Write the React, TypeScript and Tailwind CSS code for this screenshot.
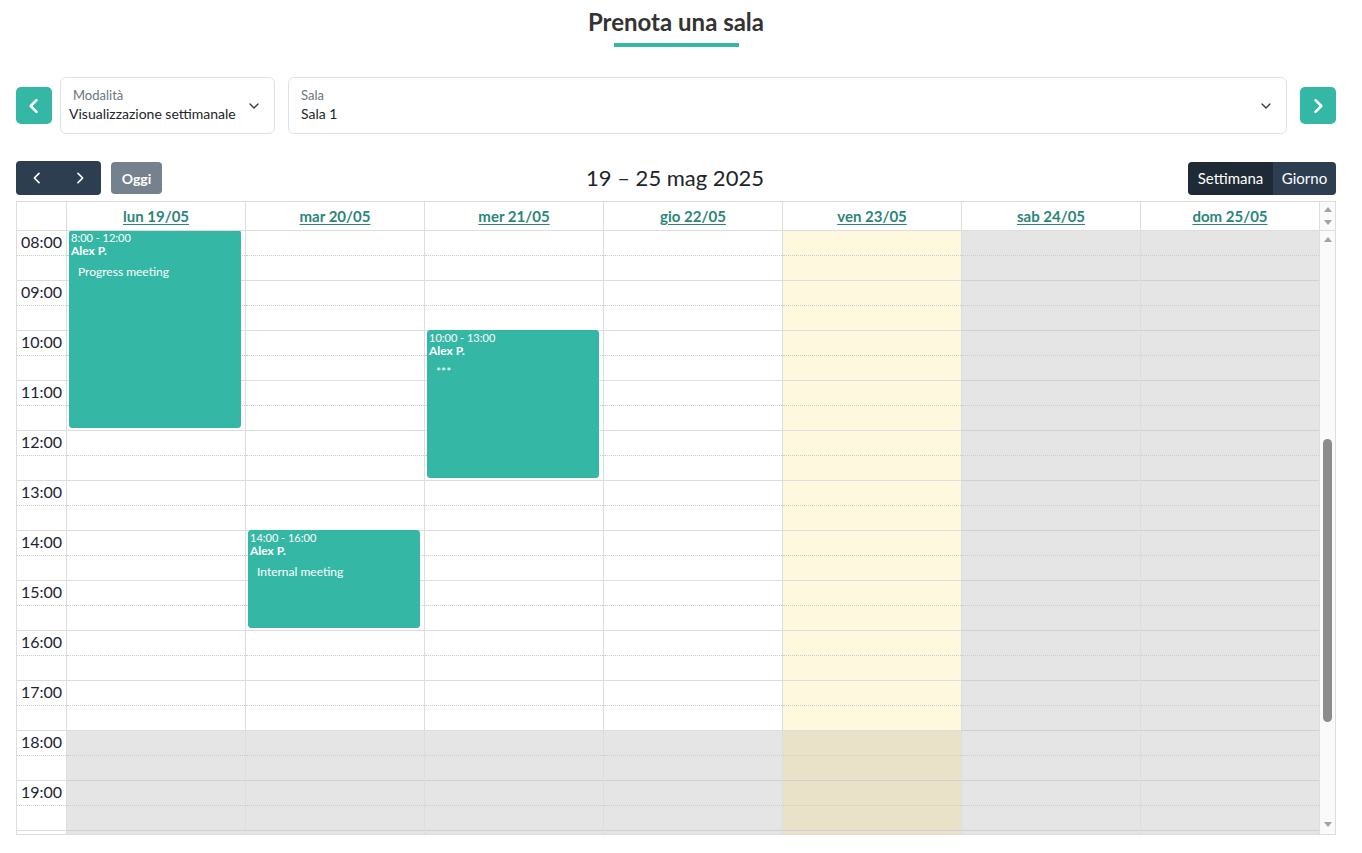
import React from "react";

type CalEvent = {
  day: number;
  start: number;
  end: number;
  time: string;
  who: string;
  title: string;
};

const days = [
  "lun 19/05",
  "mar 20/05",
  "mer 21/05",
  "gio 22/05",
  "ven 23/05",
  "sab 24/05",
  "dom 25/05",
];

const TODAY = 4;
const FIRST_HOUR = 8;
const HOUR_PX = 50;
const hours = [8, 9, 10, 11, 12, 13, 14, 15, 16, 17, 18, 19, 20];

const events: CalEvent[] = [
  { day: 0, start: 8, end: 12, time: "8:00 - 12:00", who: "Alex P.", title: "Progress meeting" },
  { day: 2, start: 10, end: 13, time: "10:00 - 13:00", who: "Alex P.", title: "***" },
  { day: 1, start: 14, end: 16, time: "14:00 - 16:00", who: "Alex P.", title: "Internal meeting" },
];

const pad = (h: number) => (h < 10 ? "0" + h : "" + h) + ":00";

const Chevron = ({ dir, className }: { dir: "left" | "right" | "down"; className?: string }) => {
  const pts =
    dir === "left" ? "15 5 8 12 15 19" : dir === "right" ? "9 5 16 12 9 19" : "6 9 12 15 18 9";
  return (
    <svg viewBox="0 0 24 24" className={className} fill="none" stroke="currentColor" strokeLinecap="round" strokeLinejoin="round">
      <polyline points={pts} />
    </svg>
  );
};

const Tri = ({ up }: { up?: boolean }) => (
  <svg width="8" height="5" viewBox="0 0 8 5" className="block">
    <polygon points={up ? "0,5 8,5 4,0" : "0,0 8,0 4,5"} fill="#a3a3a3" />
  </svg>
);

function cellBg(day: number, hour: number) {
  const off = hour >= 18;
  if (day >= 5) return "bg-[#e5e5e5] border-[#d0d0d0]";
  if (day === TODAY) return off ? "bg-[#e9e2c9] border-[#d0d0d0]" : "bg-[#fef8df] border-[#dddddd]";
  return off ? "bg-[#e5e5e5] border-[#d0d0d0]" : "bg-white border-[#dddddd]";
}

const SelectBox = ({
  label,
  value,
  className,
  valueClass,
}: {
  label: string;
  value: string;
  className: string;
  valueClass: string;
}) => (
  <div className={"relative h-[57px] rounded-[6px] border border-[#dee2e6] bg-white pt-[9px] " + className}>
    <div className="pl-[12px] text-[13px] leading-[16px] text-[#6c757d]">{label}</div>
    <div className={"mt-[2px] text-[14px] leading-[18px] text-[#212529] " + valueClass}>{value}</div>
    <Chevron dir="down" className="absolute right-[12px] top-[20px] h-[16px] w-[16px] stroke-[2px] text-[#343a40]" />
  </div>
);

export default function App() {
  return (
    <div className="min-h-screen bg-white font-['Lato','Noto_Sans',sans-serif] text-[#212529]">
      <div className="pl-[16px] pr-[26px] pt-[7px]">
        <h1 className="text-center text-[24px] font-bold leading-[29px] text-[#333333]">Prenota una sala</h1>
        <div className="mx-auto mt-[7px] h-[4px] w-[125px] bg-[#35b7a5]" />

        <div className="mt-[30px] flex items-center">
          <button className="flex h-[37px] w-[36px] items-center justify-center rounded-[5px] bg-[#35b7a5] text-white">
            <Chevron dir="left" className="h-[20px] w-[20px] stroke-[3px]" />
          </button>
          <SelectBox
            label="Modalità"
            value="Visualizzazione settimanale"
            className="ml-[8px] w-[215px]"
            valueClass="pl-[8px]"
          />
          <SelectBox label="Sala" value="Sala 1" className="ml-[13px] flex-1" valueClass="pl-[12px]" />
          <button className="ml-[13px] flex h-[37px] w-[36px] items-center justify-center rounded-[5px] bg-[#35b7a5] text-white">
            <Chevron dir="right" className="h-[20px] w-[20px] stroke-[3px]" />
          </button>
        </div>

        <div className="mt-[27px] flex h-[34px] items-center">
          <div className="flex h-[34px] overflow-hidden rounded-[4px] bg-[#2c3e50] text-white">
            <button className="flex w-[42px] items-center justify-center">
              <Chevron dir="left" className="h-[16px] w-[16px] stroke-[2.5px]" />
            </button>
            <button className="flex w-[43px] items-center justify-center">
              <Chevron dir="right" className="h-[16px] w-[16px] stroke-[2.5px]" />
            </button>
          </div>
          <button className="ml-[10px] h-[32px] w-[51px] rounded-[4px] bg-[#2c3e50] text-[14px] font-bold text-white opacity-65">
            Oggi
          </button>
          <div className="flex-1 text-center text-[22px] leading-[30px] text-[#212529]">19 – 25 mag 2025</div>
          <div className="flex h-[33px] overflow-hidden rounded-[4px] text-[15px] text-white">
            <button className="w-[85px] bg-[#1e2b37]">Settimana</button>
            <button className="w-[63px] bg-[#2c3e50]">Giorno</button>
          </div>
        </div>

        <div className="mt-[6px] border border-[#dddddd]">
          <div className="flex h-[29px] border-b border-[#dddddd]">
            <div className="w-[49px]" />
            {days.map((d) => (
              <div
                key={d}
                className="flex flex-1 items-center justify-center border-l border-[#dddddd] text-[15px] font-bold text-[#2a8679] underline underline-offset-[2px]"
              >
                {d}
              </div>
            ))}
            <div className="flex w-[16px] flex-col items-center justify-between border-l border-[#dddddd] bg-[#fafafa] py-[5px]">
              <Tri up />
              <Tri />
            </div>
          </div>

          <div className="flex h-[603px] overflow-hidden">
            <div className="w-[49px]">
              {hours.map((h) => (
                <div key={h} className="h-[50px] border-b border-[#dddddd]">
                  <div className="h-[25px] border-b border-dotted border-[#cccccc] pl-[4px] pt-[1px] text-[16px] leading-[19px] text-[#1c2434]">
                    {h < 20 ? pad(h) : ""}
                  </div>
                </div>
              ))}
            </div>
            {days.map((d, di) => (
              <div key={d} className="relative flex-1 border-l border-[#dddddd]">
                {hours.map((h) => (
                  <div key={h} className={"h-[50px] border-b " + cellBg(di, h)}>
                    <div className="h-[25px] border-b border-dotted border-[#cccccc]" />
                  </div>
                ))}
                {events
                  .filter((e) => e.day === di)
                  .map((e) => (
                    <div
                      key={e.time}
                      className="absolute left-[2px] right-[4px] overflow-hidden rounded-[3px] border border-[#35b7a5] bg-[#35b7a5] px-[1px] text-white"
                      style={{
                        top: (e.start - FIRST_HOUR) * HOUR_PX - 1,
                        height: (e.end - e.start) * HOUR_PX - 2,
                      }}
                    >
                      <div className="text-[11px] leading-[13px]">{e.time}</div>
                      <div className="text-[12px] font-bold leading-[14px]">{e.who}</div>
                      <div className="mt-[6px] pl-[7px] text-[12px] leading-[15px]">{e.title}</div>
                    </div>
                  ))}
              </div>
            ))}
            <div className="flex w-[16px] flex-col items-center border-l border-[#dddddd] bg-[#fafafa] pb-[7px] pt-[6px]">
              <Tri up />
              <div className="h-[197px]" />
              <div className="h-[283px] w-[9px] rounded-full bg-[#8c8c8c]" />
              <div className="flex-1" />
              <Tri />
            </div>
          </div>
        </div>
      </div>
    </div>
  );
}
